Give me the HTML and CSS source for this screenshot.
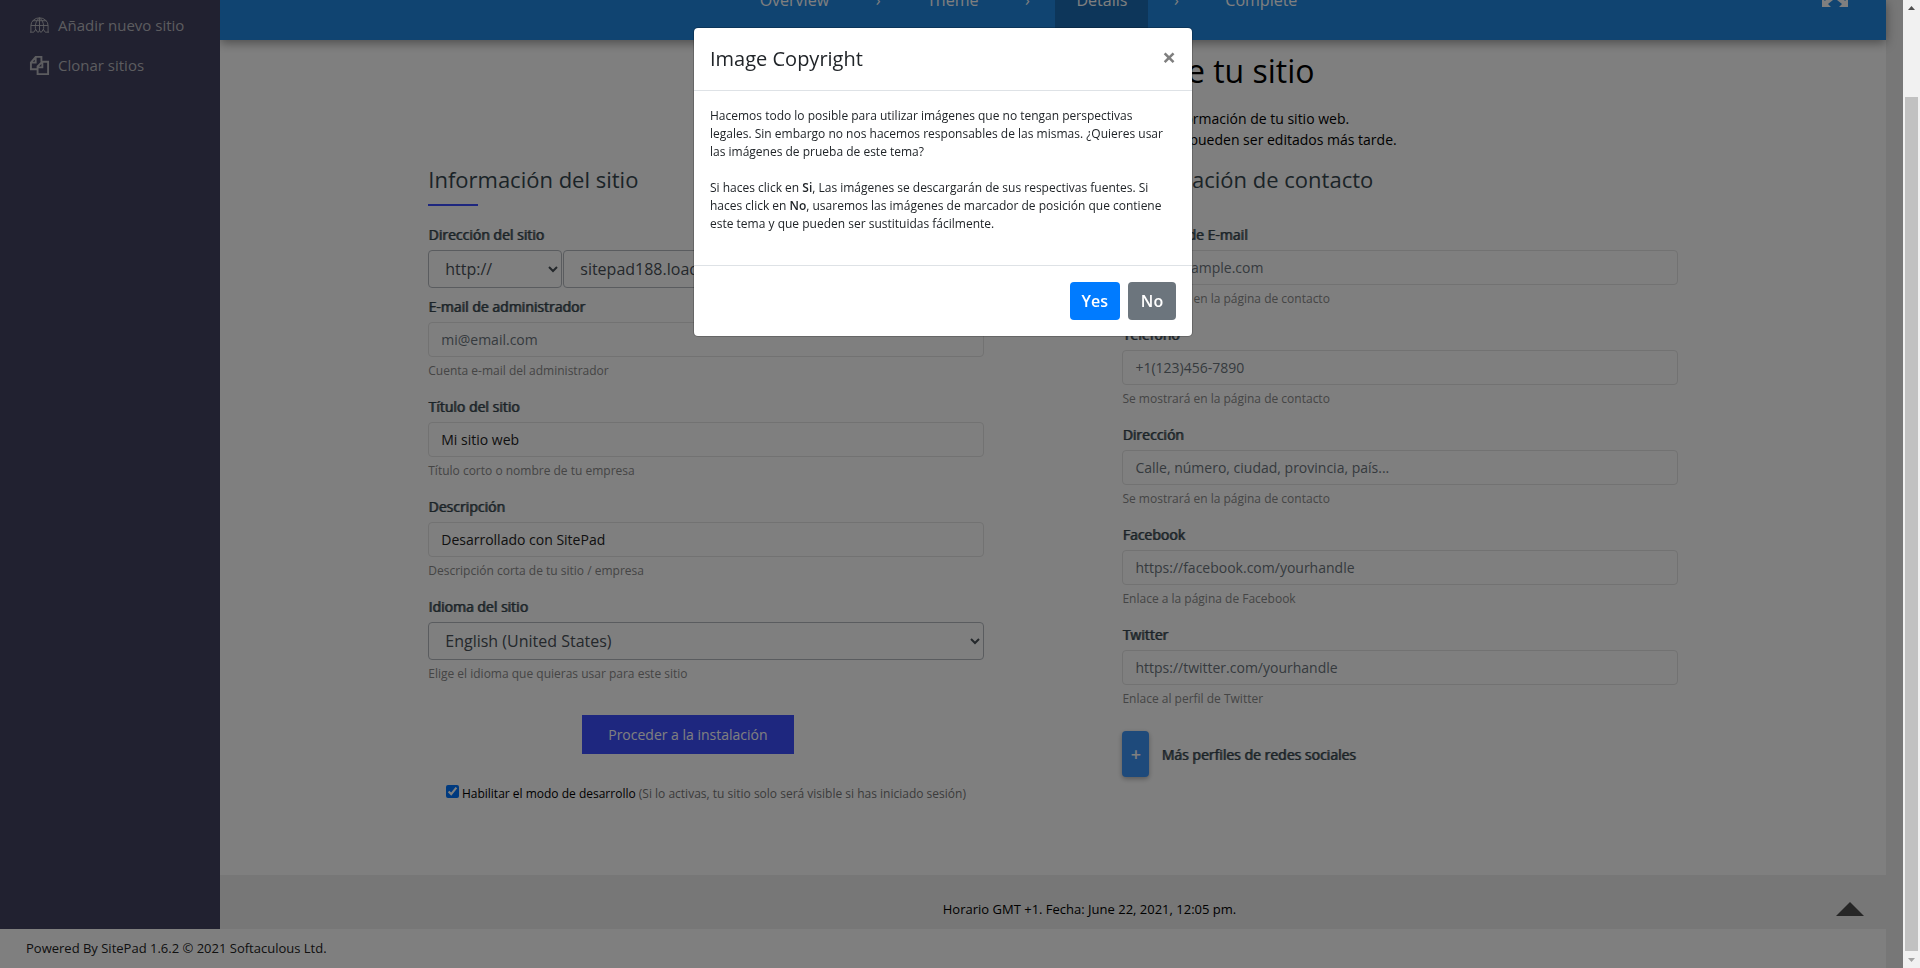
FILE: index.html
```html
<!DOCTYPE html>
<html lang="es">
<head>
<meta charset="utf-8">
<title>SitePad</title>
<link rel="stylesheet" href="styles.css">
</head>
<body>
<div class="page">
  <div class="shell">
    <nav class="sidebar" aria-label="Menú">
      <a class="side-link" href="#nuevo">
        <svg class="side-icon" viewBox="0 0 22 22" aria-hidden="true"><path d="M2 18v-7a9 8 0 0 1 18 0v7M2 11h18M4 6h14M11 3v13M7 16C6 11 7 6 11 3c4 3 5 8 4 13M1 18h4l2-3 2 3h1l1-2 1 2h1l2-3 2 3h4"/></svg>
        Añadir nuevo sitio
      </a>
      <a class="side-link" href="#clonar">
        <svg class="side-icon bold" viewBox="0 0 22 22" aria-hidden="true"><path d="M8 15H2V8l5-6h6v5M7 2v6H2M14 7h6v13H9v-8zM14 7v6H9"/></svg>
        Clonar sitios
      </a>
    </nav>
    <main class="main">
      <header class="topbar">
        <div class="topbar-inner">
          <ol class="steps">
            <li class="step">Overview</li>
            <li class="sep">›</li>
            <li class="step">Theme</li>
            <li class="sep">›</li>
            <li class="step active">Details</li>
            <li class="sep">›</li>
            <li class="step">Complete</li>
          </ol>
          <button class="fullscreen" type="button" aria-label="Pantalla completa">
            <svg viewBox="0 0 26 14" aria-hidden="true"><path d="M0 5v9h9l-3-3 5-4-4-4-4 5zM26 5v9h-9l3-3-5-4 4-4 4 5z"/></svg>
          </button>
        </div>
      </header>
      <section class="content">
        <h1 class="title">Añade todos los detalles de tu sitio</h1>
        <p class="lead">Indica los datos que se piden a continuación para completar la información de tu sitio web.<br>Todos los detalles y opciones del sitio que introduzcas en este formulario pueden ser editados más tarde.</p>
        <form class="columns">
          <div class="column">
            <h2 class="heading">Información del sitio</h2>
            <div class="field tight">
              <label for="proto">Dirección del sitio</label>
              <div class="pair">
                <select id="proto" class="select proto"><option>http://</option></select>
                <select class="select" aria-label="Dominio"><option>sitepad188.loadingcdn.com</option></select>
              </div>
            </div>
            <div class="field"><label for="mail">E-mail de administrador</label><input class="input" id="mail" type="text" placeholder="mi@email.com"><small>Cuenta e-mail del administrador</small></div>
            <div class="field"><label for="name">Título del sitio</label><input class="input" id="name" type="text" value="Mi sitio web"><small>Título corto o nombre de tu empresa</small></div>
            <div class="field"><label for="desc">Descripción</label><input class="input" id="desc" type="text" value="Desarrollado con SitePad"><small>Descripción corta de tu sitio / empresa</small></div>
            <div class="field"><label for="lang">Idioma del sitio</label><select id="lang" class="select"><option>English (United States)</option></select><small>Elige el idioma que quieras usar para este sitio</small></div>
            <button class="install" type="button">Proceder a la instalación</button>
            <div class="dev"><input id="dev" type="checkbox" checked><label for="dev">Habilitar el modo de desarrollo <span>(Si lo activas, tu sitio solo será visible si has iniciado sesión)</span></label></div>
          </div>
          <div class="column">
            <h2 class="heading">Información de contacto</h2>
            <div class="field"><label for="cmail">Dirección de E-mail</label><input class="input" id="cmail" type="text" placeholder="mail@example.com"><small>Se mostrará en la página de contacto</small></div>
            <div class="field"><label for="tel">Teléfono</label><input class="input" id="tel" type="text" placeholder="+1(123)456-7890"><small>Se mostrará en la página de contacto</small></div>
            <div class="field"><label for="addr">Dirección</label><input class="input" id="addr" type="text" placeholder="Calle, número, ciudad, provincia, país..."><small>Se mostrará en la página de contacto</small></div>
            <div class="field"><label for="fb">Facebook</label><input class="input" id="fb" type="text" placeholder="https://facebook.com/yourhandle"><small>Enlace a la página de Facebook</small></div>
            <div class="field"><label for="tw">Twitter</label><input class="input" id="tw" type="text" placeholder="https://twitter.com/yourhandle"><small>Enlace al perfil de Twitter</small></div>
            <div class="more"><button class="plus" id="plus" type="button">+</button><label for="plus">Más perfiles de redes sociales</label></div>
          </div>
        </form>
      </section>
      <div class="clock">
        <span>Horario GMT +1. Fecha: June 22, 2021, 12:05 pm.</span>
        <a class="to-top" href="#top" aria-label="Subir"></a>
      </div>
    </main>
  </div>
  <footer class="footer">Powered By SitePad 1.6.2 © 2021 Softaculous Ltd.</footer>
</div>
<div class="backdrop">
  <div class="modal" role="dialog" aria-modal="true" aria-labelledby="mt">
    <div class="modal-head"><h5 id="mt">Image Copyright</h5><button class="close" type="button" aria-label="Cerrar">×</button></div>
    <div class="modal-body">
      <p>Hacemos todo lo posible para utilizar imágenes que no tengan perspectivas legales. Sin embargo no nos hacemos responsables de las mismas. ¿Quieres usar las imágenes de prueba de este tema?</p>
      <p>Si haces click en <b>Si</b>, Las imágenes se descargarán de sus respectivas fuentes. Si haces click en <b>No</b>, usaremos las imágenes de marcador de posición que contiene este tema y que pueden ser sustituidas fácilmente.</p>
    </div>
    <div class="modal-foot"><button class="btn yes" type="button">Yes</button><button class="btn no" type="button">No</button></div>
  </div>
</div>
<div class="scrollbar" aria-hidden="true">
  <svg viewBox="0 0 17 17"><path fill="#505050" d="M5 10h7L8.500 6z"/></svg>
  <div class="thumb"></div>
  <svg viewBox="0 0 17 17"><path fill="#a3a3a3" d="M5 7h7l-3.500 4z"/></svg>
</div>
</body>
</html>
```
FILE: styles.css
```css
*{box-sizing:border-box}
body{margin:0;padding-right:34px;min-height:100vh;background:#eee;font:14px/21px "Open Sans",sans-serif;color:#000;overflow:hidden}
h1,h2,h5,p,ol{margin:0;padding:0;font-weight:400}
button,input,select{font-family:inherit}
.page{display:flex;flex-direction:column;min-height:100vh;background:#fff}
.shell{display:flex;flex:1}
.sidebar{width:220px;background:#424260;padding-top:9px;display:flex;flex-direction:column;gap:8px}
.side-link{display:flex;align-items:center;gap:8px;height:32px;padding-left:29px;color:#b9b9bf;font-size:15px;text-decoration:none}
.side-icon{width:21px;height:21px;fill:none;stroke:#b9b9bf;stroke-width:1}
.side-icon.bold{stroke-width:2}
.main{flex:1;min-width:0;display:flex;flex-direction:column}
.topbar{height:40px;background:#2088e2;box-shadow:0 3px 10px rgba(0,0,0,.4);display:flex;align-items:flex-end;clip-path:inset(0 -20px -20px 0);color:#fff}
.topbar-inner{flex:1;display:flex;align-items:center;height:80px;padding-right:38px}
.steps{flex:1;display:flex;justify-content:center;list-style:none;font-size:16px;line-height:80px;padding-left:15px}
.step{padding:0 21px}
.step.active{background:#1a6db4}
.sep{width:56px;text-align:center}
.fullscreen{width:26px;height:24px;padding:0;border:0;background:none}
.fullscreen svg{display:block;width:26px;height:14px;fill:#fff}
.content{flex:1;padding-top:12px}
.title{font-size:32px;line-height:38px;text-align:center;padding-left:4px}
.lead{margin:18px 0 16px;text-align:center}
.columns{display:grid;grid-template-columns:5fr 5fr;width:83.333%;margin:0 auto}
.column{padding:0 10%;display:flex;flex-direction:column}
.heading{font-size:22px;line-height:26px;color:#37474f;margin-bottom:18px}
.heading::after{content:"";display:block;width:50px;height:2px;margin-top:12px;background:#3d4eff}
.field{display:flex;flex-direction:column;margin-bottom:16px}
.field.tight{margin-bottom:8px}
.field label,.more label{color:#37474f;text-shadow:1px 0 rgba(55,71,79,.8)}
.field label{margin-bottom:5px}
.field small{font-size:12px;line-height:18px;margin-top:5px;color:#8a8a8a}
.pair{display:flex;gap:1px}
.select{height:38px;flex:1 0 auto;padding:0 12px;border:1px solid #b4b9be;border-radius:4px;background:#fff;color:#495057;font-size:16px}
.select.proto{flex:0 0 134px}
.input{height:35px;padding:0 12px;border:1px solid #e4e4e4;border-radius:4px;background:#fff;color:#222;font-size:14px}
.input::placeholder{color:#6c757d;opacity:1}
.install{align-self:center;margin:16px 36px 31px 0;width:212px;height:39px;border:0;background:#3d4eff;color:#fff;font-size:14px}
.dev{display:flex;justify-content:center;gap:3px;font-size:12px;line-height:18px;white-space:nowrap}
.dev input{width:13px;height:13px;margin:0}
.dev span{color:#777}
.more{display:flex;align-items:center;gap:12px;margin-top:7px}
.plus{width:27px;height:46px;padding:0;border:0;border-radius:4px;background:#3d94f6;color:#fff;font-size:18px;font-weight:600;box-shadow:0 2px 5px rgba(0,0,0,.3)}
.clock{display:flex;align-items:center;justify-content:center;height:54px;background:#eee;padding:14px 22px 0 0;font-size:13px}
.clock span{flex:1;text-align:center;padding-left:123px}
.to-top{border:solid transparent;border-width:0 14px 14px;border-bottom-color:#4c4c4c}
.footer{height:39px;padding-left:26px;line-height:39px;font-size:13px;color:#222}
.backdrop{position:fixed;inset:0 17px 0 0;padding:27px 17px 0 0;background:rgba(0,0,0,.5)}
.modal{max-width:500px;margin:0 auto;border:1px solid rgba(0,0,0,.2);background:#fff;background-clip:padding-box;border-radius:5px;color:#212529}
.modal-head{display:flex;justify-content:space-between;align-items:center;padding:16px;border-bottom:1px solid #dee2e6}
.modal-head h5{font-size:20px;line-height:30px}
.close{padding:0 0 4px;border:0;background:none;color:#7f7f7f;font-size:24px;line-height:24px;font-weight:700}
.modal-body{padding:16px 16px 32px;font-size:12px;line-height:18px}
.modal-body p+p{margin-top:18px}
.modal-body b{font-weight:600}
.modal-foot{display:flex;justify-content:flex-end;gap:8px;padding:16px;border-top:1px solid #dee2e6}
.btn{height:38px;min-width:48px;padding:0 12px;border:0;border-radius:4px;color:#fff;font-size:16px;font-weight:600}
.yes{background:#007bff}
.no{background:#6c757d}
.scrollbar{position:fixed;inset:0 0 0 auto;width:17px;background:#f1f1f1;display:flex;flex-direction:column}
.scrollbar svg{width:17px;height:17px}
.thumb{flex:1;margin:80px 2px 0;background:#c1c1c1}
```
